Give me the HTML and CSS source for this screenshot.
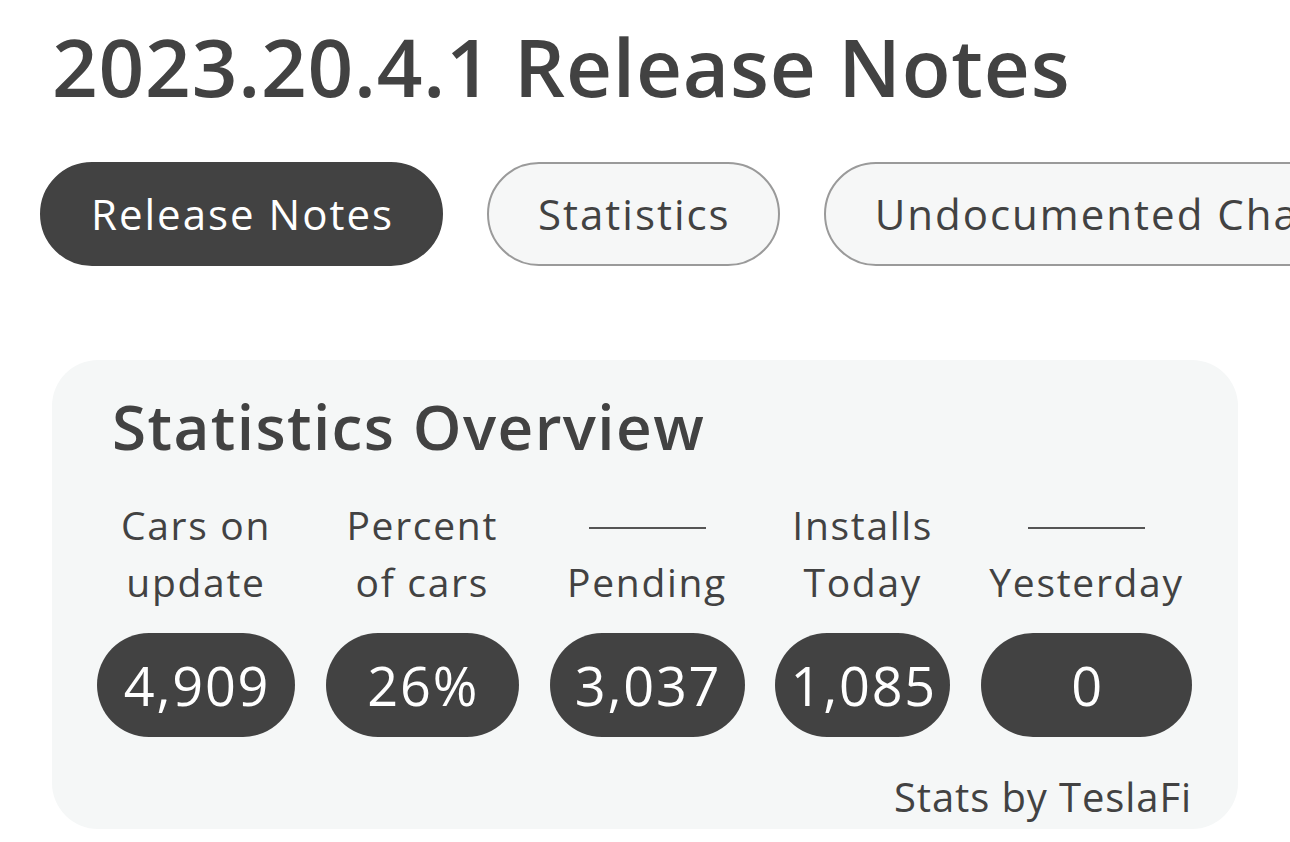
FILE: index.html
```html
<!DOCTYPE html>
<html lang="en">
<head>
<meta charset="utf-8">
<title>2023.20.4.1 Release Notes</title>
<link rel="stylesheet" href="styles.css">
</head>
<body>
<div class="page">
  <h1 class="title">2023.20.4.1 Release Notes</h1>
  <nav class="tabs">
    <a class="tab tab-active">Release Notes</a>
    <a class="tab">Statistics</a>
    <a class="tab">Undocumented Changes</a>
  </nav>
  <section class="card">
    <h2 class="card-title">Statistics Overview</h2>
    <div class="stats">
      <div class="stat">
        <div class="stat-label"><span>Cars on</span><span>update</span></div>
        <div class="stat-value">4,909</div>
      </div>
      <div class="stat">
        <div class="stat-label"><span>Percent</span><span>of cars</span></div>
        <div class="stat-value">26%</div>
      </div>
      <div class="stat">
        <div class="stat-label"><span class="dash-line"><i class="dash"></i></span><span>Pending</span></div>
        <div class="stat-value">3,037</div>
      </div>
      <div class="stat">
        <div class="stat-label"><span>Installs</span><span>Today</span></div>
        <div class="stat-value">1,085</div>
      </div>
      <div class="stat">
        <div class="stat-label"><span class="dash-line"><i class="dash"></i></span><span>Yesterday</span></div>
        <div class="stat-value">0</div>
      </div>
    </div>
    <div class="credit">Stats by TeslaFi</div>
  </section>
</div>
</body>
</html>
```
FILE: styles.css
```css
html, body {
  margin: 0;
  padding: 0;
  background: #ffffff;
  overflow: hidden;
}
body {
  font-family: "Open Sans", "Liberation Sans", sans-serif;
  color: #424242;
}
.page {
  padding: 18px 0 0 40px;
}
.title {
  margin: 0 0 48px 12px;
  font-size: 80px;
  line-height: 96px;
  font-weight: 600;
  letter-spacing: 0.8px;
  white-space: nowrap;
}
.tabs {
  display: flex;
  gap: 44px;
  overflow: hidden;
  white-space: nowrap;
}
.tab {
  flex: none;
  box-sizing: border-box;
  height: 104px;
  display: flex;
  align-items: center;
  padding: 0 47px 0 49px;
  border: 2.5px solid #9a9a9a;
  border-radius: 52px;
  background: #f6f7f7;
  font-size: 42px;
  line-height: 50px;
  letter-spacing: 2px;
  color: #424242;
}
.tab-active {
  background: #424242;
  border-color: #424242;
  color: #ffffff;
}
.card {
  margin: 94px 0 0 12px;
  width: 1186px;
  box-sizing: border-box;
  background: #f5f7f7;
  border-radius: 46px;
  padding: 29px 46px 8px 60px;
}
.card-title {
  margin: 0 0 33px 0;
  font-size: 62px;
  line-height: 74px;
  font-weight: 600;
  letter-spacing: 1.4px;
}
.stats {
  display: grid;
  grid-template-columns: 198px 193px 195px 175px 211px;
  column-gap: 30.75px;
  margin-left: -15px;
}
.stat {
  display: flex;
  flex-direction: column;
  align-items: stretch;
}
.stat-label {
  display: flex;
  flex-direction: column;
  align-items: center;
  font-size: 39px;
  line-height: 57px;
  letter-spacing: 1.7px;
  white-space: nowrap;
}
.dash-line {
  height: 57px;
  display: flex;
  align-items: center;
  justify-content: center;
}
.dash {
  display: block;
  width: 117px;
  height: 0;
  border-top: 2.5px solid #555555;
  margin-top: 7px;
}
.stat-value {
  margin-top: 23px;
  height: 104px;
  box-sizing: border-box;
  display: flex;
  align-items: center;
  justify-content: center;
  padding-left: 2px;
  border-radius: 52px;
  background: #424242;
  color: #ffffff;
  font-size: 54px;
  line-height: 64px;
  font-weight: 400;
  letter-spacing: 1.8px;
  white-space: nowrap;
}
.credit {
  margin-top: 36px;
  text-align: right;
  font-size: 40px;
  line-height: 48px;
  letter-spacing: 0.9px;
}
```
